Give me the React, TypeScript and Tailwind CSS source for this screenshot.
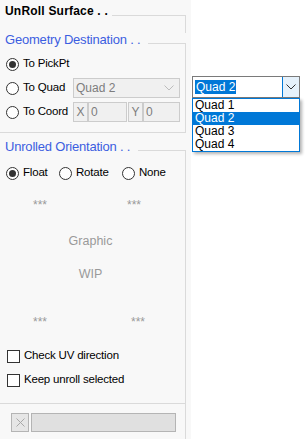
import React from 'react'

function Radio({ checked }: { checked?: boolean }) {
  return (
    <span className="w-[13px] h-[13px] rounded-full border border-[#333333] bg-white flex items-center justify-center shrink-0">
      {checked && <span className="w-[7px] h-[7px] rounded-full bg-[#333333]" />}
    </span>
  )
}

function Check() {
  return <span className="w-[13px] h-[13px] border border-[#333333] bg-white shrink-0" />
}

function Chevron({ color }: { color: string }) {
  return (
    <svg width="10" height="6" viewBox="0 0 10 6" fill="none">
      <path d="M0.5 0.5 L5 5 L9.5 0.5" stroke={color} strokeWidth="1" />
    </svg>
  )
}

function Legend({ text, top }: { text: string; top: string }) {
  return (
    <div className={`flex h-[14px] ${top}`}>
      <span className="pl-[5px] text-[13px] leading-[14px] tracking-[-0.2px] text-[#3c5ee0] whitespace-nowrap">{text}</span>
      <div className="flex-1 ml-[8px] mt-[10px] border-t border-r border-[#dadada]" />
    </div>
  )
}

export default function App() {
  return (
    <div className="relative w-[308px] h-[439px] bg-white font-['Liberation_Sans',sans-serif] text-[11.5px] tracking-[-0.2px] text-black overflow-hidden">
      <div className="w-[191px] h-[439px] bg-[#f8f8f8] flex flex-col">
        {/* header */}
        <div className="flex h-[33px] pr-[5px]">
          <span className="pl-[5px] pt-[4px] font-bold text-[12px] leading-[15px] tracking-[0.2px] whitespace-nowrap">UnRoll Surface . .</span>
          <div className="flex-1 ml-[4px] mt-[15px] border-t border-r border-[#dadada]" />
        </div>

        {/* geometry destination */}
        <div className="flex flex-col h-[100px] mr-[5px] border-b border-[#dadada]">
          <Legend text="Geometry Destination . ." top="" />
          <div className="flex-1 flex flex-col pt-[5px] border-r border-[#dadada]">
            <div className="flex items-center h-[24px] pl-[6px]">
              <Radio checked />
              <span className="ml-[4px]">To PickPt</span>
            </div>
            <div className="flex items-center h-[24px] pl-[6px]">
              <Radio />
              <span className="ml-[4px] w-[50px]">To Quad</span>
              <div className="w-[107px] h-[20px] border border-[#cccccc] bg-[#f0f0f0] flex items-center justify-between pl-[2px] pr-[5px] text-[#7d7d7d] text-[12px] tracking-normal">
                <span>Quad 2</span>
                <Chevron color="#bcbcbc" />
              </div>
            </div>
            <div className="flex items-center h-[24px] pl-[6px]">
              <Radio />
              <span className="ml-[4px] w-[50px]">To Coord</span>
              <div className="flex gap-[1px] text-[12px] tracking-normal">
                <div className="flex h-[20px] w-[54px]">
                  <span className="w-[15px] border border-[#cccccc] bg-[#f0f0f0] text-[#7d7d7d] flex items-center justify-center">X</span>
                  <span className="flex-1 border border-[#cccccc] bg-[#f0f0f0] text-[#7d7d7d] flex items-center pl-[2px]">0</span>
                </div>
                <div className="flex h-[20px] w-[52px]">
                  <span className="w-[15px] border border-[#cccccc] bg-[#f0f0f0] text-[#7d7d7d] flex items-center justify-center">Y</span>
                  <span className="flex-1 border border-[#cccccc] bg-[#f0f0f0] text-[#7d7d7d] flex items-center pl-[2px]">0</span>
                </div>
              </div>
            </div>
          </div>
        </div>

        {/* unrolled orientation */}
        <div className="flex flex-col h-[271px] mr-[5px] border-b border-[#dadada]">
          <Legend text="Unrolled Orientation . ." top="mt-[7px]" />
          <div className="flex-1 flex flex-col border-r border-[#dadada]">
            <div className="flex items-center h-[24px] pl-[6px] mt-[7px]">
              <Radio checked />
              <span className="ml-[4px] w-[36px]">Float</span>
              <Radio />
              <span className="ml-[4px] w-[46px]">Rotate</span>
              <Radio />
              <span className="ml-[4px]">None</span>
            </div>
            <div className="flex flex-col h-[159px] text-[#9a9a9a] tracking-normal">
              <div className="flex h-[14px] mt-[13px] text-[12px] leading-[14px]">
                <span className="ml-[33px]">***</span>
                <span className="ml-[80px]">***</span>
              </div>
              <div className="mt-[22px] h-[14px] text-[12.5px] leading-[14px] text-center pr-[4px]">Graphic</div>
              <div className="mt-[19px] h-[14px] text-[12.5px] leading-[14px] text-center pr-[4px]">WIP</div>
              <div className="flex h-[14px] mt-[34px] text-[12px] leading-[14px]">
                <span className="ml-[33px]">***</span>
                <span className="ml-[84px]">***</span>
              </div>
            </div>
            <div className="flex items-center h-[24px] pl-[7px]">
              <Check />
              <span className="ml-[4px]">Check UV direction</span>
            </div>
            <div className="flex items-center h-[24px] pl-[7px]">
              <Check />
              <span className="ml-[4px]">Keep unroll selected</span>
            </div>
          </div>
        </div>

        {/* footer */}
        <div className="flex-1 mr-[5px] border-r border-[#dadada] flex items-start pt-[9px] pl-[11px] gap-[2px]">
          <div className="w-[18px] h-[19px] border border-[#b4b4b4] bg-[#e6e6e6] flex items-center justify-center">
            <svg width="9" height="9" viewBox="0 0 9 9" fill="none">
              <path d="M0.5 0.5 L8.5 8.5 M8.5 0.5 L0.5 8.5" stroke="#a8a8a8" strokeWidth="1" />
            </svg>
          </div>
          <div className="w-[145px] h-[19px] border border-[#b4b4b4] bg-[#e0e0e0]" />
        </div>
      </div>

      {/* open dropdown popup */}
      <div className="absolute left-[192px] top-[76px] w-[108px] flex flex-col text-[12px] tracking-normal">
        <div className="h-[22px] border border-[#7a7a7a] bg-white flex items-center pl-[2px]">
          <span className="flex-1">
            <span className="bg-[#0078d7] text-white px-[1px]">Quad 2</span>
          </span>
          <div className="w-[17px] h-[20px] border-l border-[#0078d7] bg-[#e5f1fb] flex items-center justify-center">
            <Chevron color="#333333" />
          </div>
        </div>
        <div className="border border-[#0078d7] bg-white shadow-[2px_2px_3px_rgba(0,0,0,0.3)]">
          <div className="h-[13px] leading-[13px] pl-[2px]">Quad 1</div>
          <div className="h-[13px] leading-[13px] pl-[2px] bg-[#0078d7] text-white">Quad 2</div>
          <div className="h-[13px] leading-[13px] pl-[2px]">Quad 3</div>
          <div className="h-[13px] leading-[13px] pl-[2px]">Quad 4</div>
        </div>
      </div>
    </div>
  )
}
